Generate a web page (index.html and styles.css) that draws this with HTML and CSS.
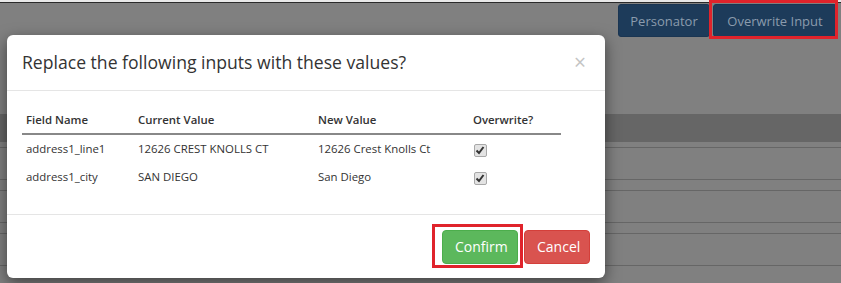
FILE: index.html
```html
<!DOCTYPE html>
<html lang="en">
<head>
    <meta charset="UTF-8">
    <title>Overwrite Input</title>
    <link rel="stylesheet" href="styles.css">
</head>
<body>
    <div class="page">
        <div class="toolbar">
            <button class="bar-btn btn-personator">Personator</button>
            <button class="bar-btn btn-overwrite">Overwrite Input</button>
            <div class="mark mark-top"></div>
        </div>
        <div class="grid">
            <div class="grid-head"></div>
            <div class="grid-row"></div>
            <div class="grid-row"></div>
            <div class="grid-row"></div>
        </div>
    </div>

    <!-- Confirm dialog -->
    <div class="modal">
        <div class="modal-header">
            <h4 class="modal-title">Replace the following inputs with these values?</h4>
            <span class="close">&times;</span>
        </div>
        <div class="modal-body">
            <table class="table">
                <thead>
                    <tr>
                        <th class="col-field">Field Name</th>
                        <th class="col-current">Current Value</th>
                        <th class="col-new">New Value</th>
                        <th>Overwrite?</th>
                    </tr>
                </thead>
                <tbody>
                    <tr>
                        <td>address1_line1</td>
                        <td>12626 CREST KNOLLS CT</td>
                        <td>12626 Crest Knolls Ct</td>
                        <td><span class="check"><svg viewBox="0 0 12 12" width="12" height="12"><path d="M2.5 6.5 L5 9 L9.5 3" fill="none" stroke="#333" stroke-width="2"/></svg></span></td>
                    </tr>
                    <tr>
                        <td>address1_city</td>
                        <td>SAN DIEGO</td>
                        <td>San Diego</td>
                        <td><span class="check"><svg viewBox="0 0 12 12" width="12" height="12"><path d="M2.5 6.5 L5 9 L9.5 3" fill="none" stroke="#333" stroke-width="2"/></svg></span></td>
                    </tr>
                </tbody>
            </table>
        </div>
        <div class="modal-footer">
            <button class="btn btn-success">Confirm</button>
            <button class="btn btn-danger">Cancel</button>
            <div class="mark mark-confirm"></div>
        </div>
    </div>
</body>
</html>
```

FILE: styles.css
```css
* {
    margin: 0;
    padding: 0;
    box-sizing: border-box;
    font-family: 'Open Sans', 'Noto Sans', sans-serif;
}

body {
    background: #e8e8e8;
    padding-top: 2px;
    overflow: hidden;
}

.page {
    height: 281px;
    background: #808080;
    border-top: 1px solid #2a2a2a;
}

.toolbar {
    position: relative;
    display: flex;
    justify-content: flex-end;
    gap: 3px;
    padding: 1px 4px 0 0;
}

.bar-btn {
    height: 33px;
    background: #1d3b5a;
    border: 1px solid #1a3552;
    border-radius: 3px;
    color: #8b9bad;
    font-size: 13px;
}

.btn-personator {
    width: 92px;
}

.btn-overwrite {
    width: 124px;
}

.mark {
    position: absolute;
    border: 3px solid #e0232b;
}

.mark-top {
    right: 3px;
    top: -3px;
    width: 129px;
    height: 39px;
}

.grid {
    margin-top: 77px;
}

.grid-head {
    height: 28px;
    background: #666;
    margin-bottom: 5px;
}

.grid-row {
    height: 33px;
    border-top: 1px solid #666;
    border-bottom: 1px solid #666;
    margin-bottom: 10px;
}

.modal {
    position: absolute;
    left: 7px;
    top: 35px;
    width: 598px;
    background: #fff;
    border-radius: 6px;
    box-shadow: 0 5px 15px rgba(0, 0, 0, 0.5);
}

.modal-header {
    display: flex;
    justify-content: space-between;
    align-items: center;
    padding: 15px 19px 15px 15px;
    border-bottom: 1px solid #e5e5e5;
}

.modal-title {
    font-size: 17.6px;
    font-weight: 400;
    line-height: 25px;
    color: #333;
}

.close {
    font-size: 21px;
    line-height: 1;
    color: #c4c4c4;
}

.modal-body {
    padding: 15px 15px 24px;
}

.table {
    width: 539px;
    border-collapse: collapse;
    font-size: 11.4px;
    color: #333;
}

.table th {
    text-align: left;
    font-weight: 600;
    padding: 5px 4px;
    line-height: 17px;
    border-bottom: 2px solid #888;
}

.table td {
    padding: 5px 4px;
    line-height: 17px;
}

.col-field {
    width: 112px;
}

.col-current {
    width: 180px;
}

.col-new {
    width: 155px;
}

.check {
    display: inline-block;
    width: 13px;
    height: 13px;
    margin: 2px 0 0 1px;
    background: #e3e3e3;
    border: 1px solid #a8a8a8;
    border-radius: 2px;
    vertical-align: middle;
}

.check svg {
    display: block;
    margin: -1px 0 0 -1px;
}

.modal-footer {
    position: relative;
    display: flex;
    justify-content: flex-end;
    gap: 6px;
    padding: 15px 15px 14px;
    border-top: 1px solid #e5e5e5;
}

.btn {
    height: 34px;
    padding: 0 12px;
    border: 1px solid transparent;
    border-radius: 4px;
    color: #fff;
    font-size: 14px;
}

.btn-success {
    width: 76px;
    background: #5cb85c;
    border-color: #4cae4c;
}

.btn-danger {
    width: 66px;
    background: #d9534f;
    border-color: #d43f3a;
}

.mark-confirm {
    left: 425px;
    top: 9px;
    width: 91px;
    height: 44px;
}
```
